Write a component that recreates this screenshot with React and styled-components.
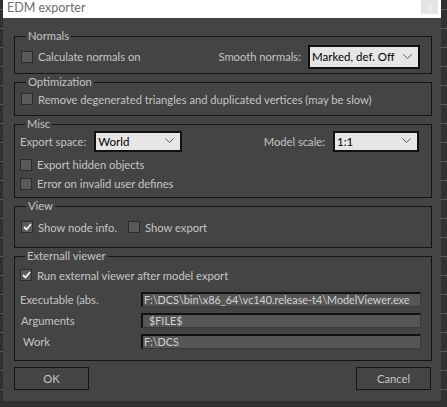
import React from 'react';
import styled, { createGlobalStyle } from 'styled-components';

const GlobalStyle = createGlobalStyle`
  html, body {
    margin: 0;
    padding: 0;
  }
  body {
    width: 447px;
    height: 407px;
    overflow: hidden;
    background-color: #262626;
    font-family: Lato, 'Open Sans', sans-serif;
  }
`;

const Screen = styled.div`
  width: 447px;
  height: 407px;
  background: repeating-linear-gradient(
    to bottom,
    #313131 0px,
    #313131 9px,
    #5a5a5a 9px,
    #5a5a5a 10px,
    #313131 10px,
    #313131 19px
  );
`;

const Window = styled.div`
  margin-left: 3px;
  width: 438px;
  height: 401px;
  background: #444444;
  display: flex;
  flex-direction: column;
`;

const TitleBar = styled.div`
  height: 18px;
  background: #ffffff;
  display: flex;
  align-items: flex-start;
`;

const TitleText = styled.div`
  flex: 1;
  padding-left: 4px;
  font-size: 12.5px;
  line-height: 16px;
  color: #6e6e6e;
`;

const CloseButton = styled.div`
  width: 17px;
  height: 14px;
  margin-right: 3px;
  background: #e5e5e5;
  color: #fafafa;
  font-size: 10px;
  line-height: 13px;
  text-align: center;
`;

const Body = styled.div`
  padding: 11px 10px 0 11px;
  display: flex;
  flex-direction: column;
  gap: 1px;
`;

const Group = styled.fieldset`
  margin: 0;
  min-width: 0;
  border: 1px solid #141414;
  padding: ${p => p.$pad || '0 12px 0 6px'};
  width: 418px;
  box-sizing: border-box;
`;

const Legend = styled.legend`
  padding: 0 2px;
  margin-left: 5px;
  font-size: 11.2px;
  line-height: 14px;
  color: #c4c4c4;
`;

const Row = styled.div`
  display: flex;
  align-items: center;
  height: ${p => p.$h || 20}px;
  margin-top: ${p => p.$mt || 0}px;
`;

const Label = styled.span`
  font-size: 11.2px;
  color: #c4c4c4;
  white-space: nowrap;
  margin-left: ${p => p.$ml || 0}px;
  margin-right: ${p => p.$mr || 0}px;
`;

const Spacer = styled.div`
  flex: 1;
`;

const CheckWrap = styled.label`
  display: flex;
  align-items: center;
  gap: 5px;
  margin-right: ${p => p.$mr || 0}px;
`;

const Box = styled.span`
  width: 12px;
  height: 12px;
  box-sizing: border-box;
  border: 1px solid #2a2a2a;
  background: #5a5a5a;
  display: flex;
  align-items: center;
  justify-content: center;
`;

const SelectBox = styled.div`
  width: ${p => p.$w}px;
  height: ${p => p.$h}px;
  box-sizing: border-box;
  border: 2px solid #111111;
  background: #e6e6e6;
  display: flex;
  align-items: center;
  padding: 0 6px 0 2px;
  font-size: 11.5px;
  color: #000;
`;

const SelectValue = styled.span`
  flex: 1;
  white-space: nowrap;
`;

const FieldRow = styled.div`
  display: flex;
  align-items: center;
  height: 15px;
  margin-top: ${p => p.$mt || 6}px;
`;

const Field = styled.div`
  margin-left: auto;
  margin-right: 10px;
  width: 280px;
  height: 15px;
  box-sizing: border-box;
  border-top: 2px solid #111;
  border-left: 2px solid #111;
  border-right: 1px solid #3a3a3a;
  border-bottom: 1px solid #3a3a3a;
  background: #565656;
  overflow: hidden;
  font-size: 10.8px;
  line-height: 12px;
  color: #d2d2d2;
  padding-left: ${p => p.$pl || 1}px;
  white-space: nowrap;
`;

const Buttons = styled.div`
  display: flex;
  justify-content: space-between;
  margin-top: 6px;
  padding: 0 10px 0 11px;
`;

const Button = styled.div`
  width: 75px;
  height: 23px;
  box-sizing: border-box;
  border: 1px solid #141414;
  background: #444;
  display: flex;
  align-items: center;
  justify-content: center;
  font-size: 11.2px;
  color: #c4c4c4;
`;

const Chevron = () => (
  <svg width="9" height="6" viewBox="0 0 9 6">
    <path d="M0.5 0.5 L4.5 4.5 L8.5 0.5" fill="none" stroke="#555" strokeWidth="1" />
  </svg>
);

const Check = ({ checked, children, mr }) => (
  <CheckWrap $mr={mr}>
    <Box>
      {checked && (
        <svg width="9" height="8" viewBox="0 0 9 8">
          <path d="M1 4 L3.5 6.5 L8 1" fill="none" stroke="#f0f0f0" strokeWidth="1.8" />
        </svg>
      )}
    </Box>
    <Label>{children}</Label>
  </CheckWrap>
);

const Select = ({ w, h, value }) => (
  <SelectBox $w={w} $h={h}>
    <SelectValue>{value}</SelectValue>
    <Chevron />
  </SelectBox>
);

export default function App() {
  return (
    <Screen>
      <GlobalStyle />
      <Window>
        <TitleBar>
          <TitleText>EDM exporter</TitleText>
          <CloseButton>x</CloseButton>
        </TitleBar>
        <Body>
          <Group $pad="1px 11px 4px 6px">
            <Legend>Normals</Legend>
            <Row $h={25}>
              <Check>Calculate normals on</Check>
              <Spacer />
              <Label $mr={7}>Smooth normals:</Label>
              <Select w={112} h={24} value="Marked, def. Off" />
            </Row>
          </Group>
          <Group $pad="0 12px 6px 6px">
            <Legend>Optimization</Legend>
            <Row>
              <Check>Remove degenerated triangles and duplicated vertices (may be slow)</Check>
            </Row>
          </Group>
          <Group $pad="0 12px 4px 5px">
            <Legend>Misc</Legend>
            <Row $h={20}>
              <Label $mr={8}>Export space:</Label>
              <Select w={88} h={21} value="World" />
              <Spacer />
              <Label $mr={8}>Model scale:</Label>
              <Select w={86} h={21} value="1:1" />
            </Row>
            <Row $h={19} $mt={4}>
              <Check>Export hidden objects</Check>
            </Row>
            <Row $h={19}>
              <Check>Error on invalid user defines</Check>
            </Row>
          </Group>
          <Group $pad="4px 12px 10px 6px">
            <Legend>View</Legend>
            <Row>
              <Check checked mr={11}>Show node info.</Check>
              <Check>Show export</Check>
            </Row>
          </Group>
          <Group $pad="2px 0 11px 5px">
            <Legend>Externall viewer</Legend>
            <Row $h={20}>
              <Check checked>Run external viewer after model export</Check>
            </Row>
            <FieldRow $mt={7}>
              <Label>Executable (abs.</Label>
              <Field>F:\DCS\bin\x86_64\vc140.release-t4\ModelViewer.exe</Field>
            </FieldRow>
            <FieldRow>
              <Label $ml={1}>Arguments</Label>
              <Field $pl={6}>$FILE$</Field>
            </FieldRow>
            <FieldRow>
              <Label $ml={3}>Work</Label>
              <Field>F:\DCS</Field>
            </FieldRow>
          </Group>
        </Body>
        <Buttons>
          <Button>OK</Button>
          <Button>Cancel</Button>
        </Buttons>
      </Window>
    </Screen>
  );
}
